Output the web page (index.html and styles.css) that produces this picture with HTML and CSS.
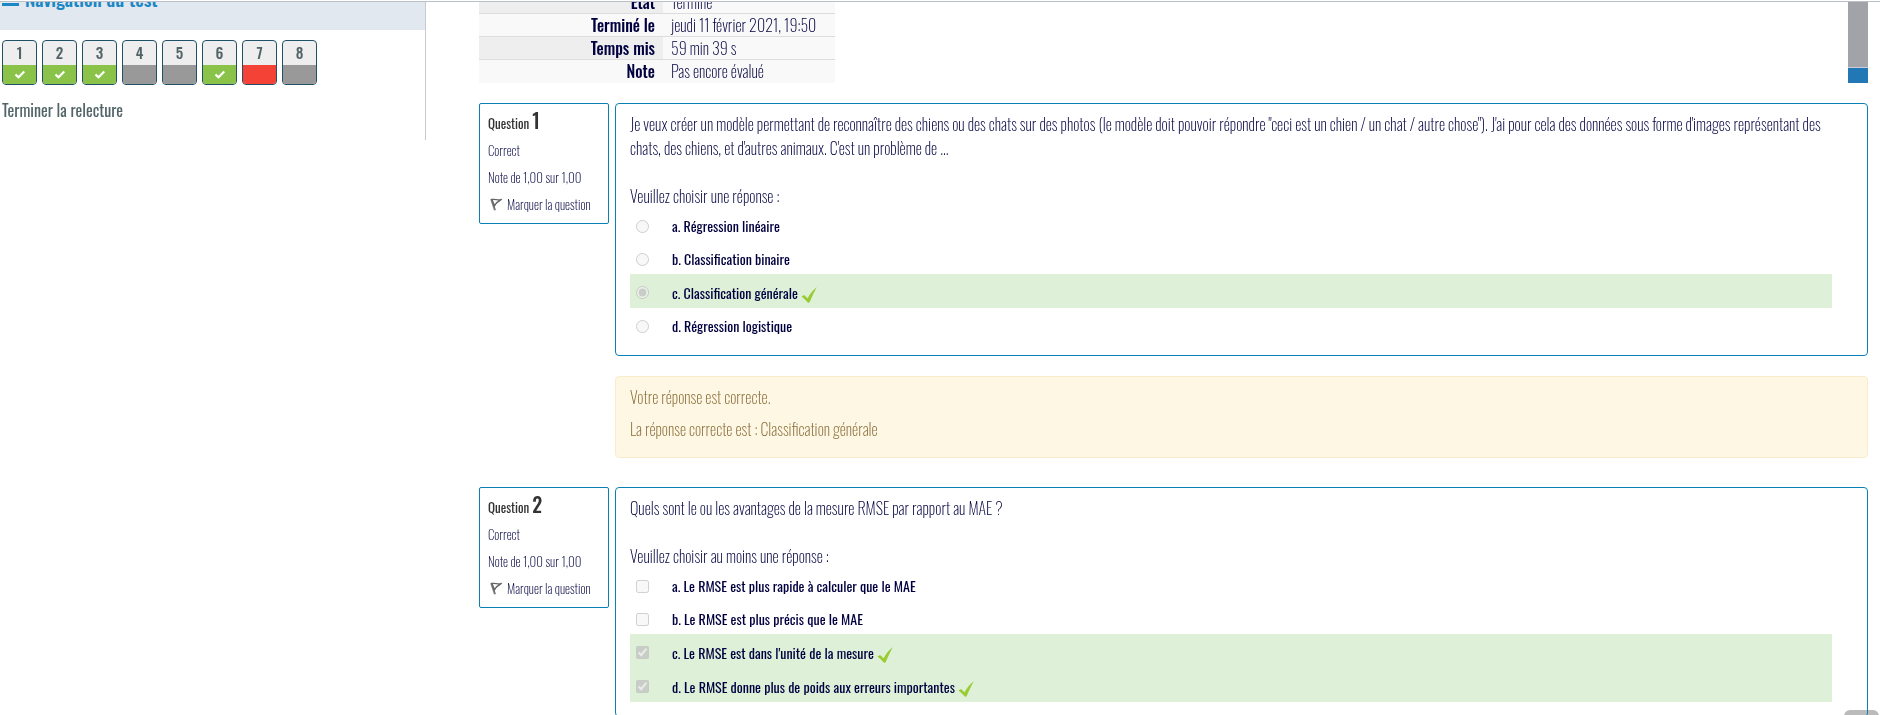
FILE: index.html
```html
<!DOCTYPE html>
<html lang="fr">
<head>
<meta charset="utf-8">
<title>Relecture du test</title>
<link rel="stylesheet" href="styles.css">
</head>
<body>
<svg class="sprite" aria-hidden="true">
  <symbol id="tick" viewBox="0 0 16 16"><path d="M0.5 9.5L3 8l3.6 3.2C9 6.500 12 3 15.800 0.200C13.500 4.500 11 9.500 8.500 15.500L7 15.700C5 13.500 3 11.500 0.500 9.500Z" fill="#9c3"/></symbol>
  <symbol id="check" viewBox="0 0 12 9"><path d="M1.500 4.500L4.500 7.300L10.300 1.500" fill="none" stroke="#fff" stroke-width="2.200"/></symbol>
  <symbol id="flag" viewBox="0 0 12 13"><path d="M1.200 1L5 12.300" fill="none" stroke="#777" stroke-width="2"/><path d="M2 1.500L4.500 8L6 5.500C7 4 9 3.500 10.800 1.700C8 2.500 5 .8 2 1.500Z" fill="#fff" stroke="#666" stroke-width="1.400"/></symbol>
</svg>
<div class="topline"></div>
<div class="page">
  <aside class="sidebar">
    <h2 class="block-title"><span class="dash"></span>Navigation du test</h2>
    <nav class="quiz-nav">
      <a class="qn ok" href="#q1">1<span class="state"><svg><use href="#check"/></svg></span></a>
      <a class="qn ok" href="#q2">2<span class="state"><svg><use href="#check"/></svg></span></a>
      <a class="qn ok" href="#q3">3<span class="state"><svg><use href="#check"/></svg></span></a>
      <a class="qn" href="#q4">4<span class="state"></span></a>
      <a class="qn" href="#q5">5<span class="state"></span></a>
      <a class="qn ok" href="#q6">6<span class="state"><svg><use href="#check"/></svg></span></a>
      <a class="qn ko" href="#q7">7<span class="state"></span></a>
      <a class="qn" href="#q8">8<span class="state"></span></a>
    </nav>
    <a class="finish" href="#end">Terminer la relecture</a>
  </aside>
  <main class="main">
    <div class="overview">
      <table class="summary">
        <tr><th scope="row">État</th><td>Terminé</td></tr>
        <tr><th scope="row">Terminé le</th><td>jeudi 11 février 2021, 19:50</td></tr>
        <tr><th scope="row">Temps mis</th><td>59 min 39 s</td></tr>
        <tr><th scope="row">Note</th><td>Pas encore évalué</td></tr>
      </table>
      <div class="rail"><div class="rail-grey"></div><div class="rail-blue"></div></div>
    </div>

    <section class="question" id="q1">
      <div class="info">
        <h3>Question <b>1</b></h3>
        <p>Correct</p>
        <p>Note de 1,00 sur 1,00</p>
        <a class="mark" href="#q1"><svg><use href="#flag"/></svg>Marquer la question</a>
      </div>
      <div class="content">
        <div class="formulation">
          <p class="text">Je veux créer un modèle permettant de reconnaître des chiens ou des chats sur des photos (le modèle doit pouvoir répondre "ceci est un chien / un chat / autre chose"). J'ai pour cela des données sous forme d'images représentant des chats, des chiens, et d'autres animaux. C'est un problème de ...</p>
          <p class="prompt">Veuillez choisir une réponse :</p>
          <div class="answer"><input type="radio" name="r1" id="r1a" disabled><label for="r1a">a. Régression linéaire</label></div>
          <div class="answer"><input type="radio" name="r1" id="r1b" disabled><label for="r1b">b. Classification binaire</label></div>
          <div class="answer correct"><input type="radio" name="r1" id="r1c" disabled checked><label for="r1c">c. Classification générale</label><svg><use href="#tick"/></svg></div>
          <div class="answer"><input type="radio" name="r1" id="r1d" disabled><label for="r1d">d. Régression logistique</label></div>
        </div>
        <div class="outcome">
          <p>Votre réponse est correcte.</p>
          <p>La réponse correcte est : Classification générale</p>
        </div>
      </div>
    </section>

    <section class="question" id="q2">
      <div class="info">
        <h3>Question <b>2</b></h3>
        <p>Correct</p>
        <p>Note de 1,00 sur 1,00</p>
        <a class="mark" href="#q2"><svg><use href="#flag"/></svg>Marquer la question</a>
      </div>
      <div class="content">
        <div class="formulation">
          <p class="text">Quels sont le ou les avantages de la mesure RMSE par rapport au MAE ?</p>
          <p class="prompt">Veuillez choisir au moins une réponse :</p>
          <div class="answer"><input type="checkbox" id="c2a" disabled><label for="c2a">a. Le RMSE est plus rapide à calculer que le MAE</label></div>
          <div class="answer"><input type="checkbox" id="c2b" disabled><label for="c2b">b. Le RMSE est plus précis que le MAE</label></div>
          <div class="answer correct"><input type="checkbox" id="c2c" disabled checked><label for="c2c">c. Le RMSE est dans l'unité de la mesure</label><svg><use href="#tick"/></svg></div>
          <div class="answer correct"><input type="checkbox" id="c2d" disabled checked><label for="c2d">d. Le RMSE donne plus de poids aux erreurs importantes</label><svg><use href="#tick"/></svg></div>
        </div>
      </div>
    </section>
  </main>
</div>
<button class="to-top" type="button" aria-label="Haut de page"></button>
</body>
</html>
```
FILE: styles.css
```css
* { box-sizing: border-box; }
body {
  margin: 0;
  padding-top: 1px;
  height: 100vh;
  overflow: hidden;
  display: flex;
  flex-direction: column;
  background: #fff;
  color: #000040;
  font: 200 16px/24px Oswald, "Liberation Sans Narrow", "Roboto Condensed", Roboto, sans-serif;
}
h2, h3, p { margin: 0; }
a { color: inherit; text-decoration: none; }
.sprite { display: none; }
.topline { flex: none; height: 1px; background: #bbbfc9; }
.page {
  flex: 1;
  min-height: 0;
  display: flex;
  align-items: flex-start;
  gap: 53px;
  padding-right: 12px;
  overflow: hidden;
}

.sidebar {
  flex: none;
  width: 426px;
  padding-bottom: 18px;
  border-right: 1px solid #c8cacf;
  color: #526468;
}
.block-title {
  display: flex;
  align-items: center;
  gap: 6px;
  height: 50px;
  margin-top: -22px;
  padding: 0 0 14px 2px;
  background: #e1e8ef;
  color: #1b87c5;
  font-size: 19px;
  font-weight: 500;
}
.dash { width: 17px; height: 3px; margin-top: 13px; background: #1b87c5; }
.quiz-nav { display: flex; gap: 5px; padding: 10px 2px; }
.qn {
  display: flex;
  flex-direction: column;
  justify-content: space-between;
  width: 35px;
  height: 45px;
  border: 1px solid #205068;
  border-radius: 4px;
  overflow: hidden;
  background: #eee;
  font-size: 15px;
  font-weight: 500;
  line-height: 23px;
  text-align: center;
}
.state { display: flex; justify-content: center; align-items: center; height: 19px; background: #999; }
.state svg { width: 12px; height: 9px; }
.ok .state { background: #8bc34a; }
.ko .state { background: #f44336; }
.finish { display: block; margin-top: 3px; padding-left: 2px; font-weight: 400; }

.main { flex: 1; min-width: 0; }
.overview { display: flex; justify-content: space-between; margin-top: -12px; }
.summary { width: 356px; border-spacing: 0; border-collapse: collapse; background: #f9f9f9; }
.summary th, .summary td { height: 23px; padding: 0 8px; line-height: 22px; text-align: left; border-top: 1px solid #ddd; }
.summary th { width: 184px; text-align: right; font-weight: 500; }
.summary tr:nth-child(odd) th { background: #eee; }
.rail { display: flex; flex-direction: column; gap: 1px; width: 20px; background: #ccd; }
.rail-grey { flex: 1; background: #a2a3a8; }
.rail-blue { height: 15px; background: #2278b4; }

.question { display: flex; align-items: flex-start; gap: 6px; margin-top: 20px; }
.question + .question { margin-top: 29px; }
.info {
  flex: none;
  width: 130px;
  height: 121px;
  padding: 3px 8px;
  border: 1px solid #0a80b5;
  border-radius: 2px;
  font-size: 13px;
  line-height: 27px;
  white-space: nowrap;
}
.info h3 { font-size: 13px; font-weight: 400; color: #333; }
.info b { font-size: 20px; font-weight: 500; }
.mark { display: flex; align-items: center; gap: 5px; padding-left: 2px; }
.mark svg { width: 12px; height: 13px; }
.content { flex: 1; min-width: 0; }
.formulation { padding: 8px 35px 14px 14px; border: 1px solid #0a80b5; border-radius: 4px; }
.text { margin-bottom: 24px; }
.answer { display: flex; align-items: center; height: 33px; padding: 4px 0 0 6px; font-size: 14px; font-weight: 400; }
.answer.correct { height: 34px; background: #def0d8; }
.answer input { width: 13px; height: 13px; margin: 0 23px 0 0; }
.answer svg { width: 16px; height: 16px; margin: 4px 0 0 3px; }
.outcome {
  margin-top: 20px;
  padding: 8px 14px;
  border: 1px solid #faebcc;
  border-radius: 4px;
  background: #fdf7e3;
  color: #8a6d3b;
}
.outcome p { margin-bottom: 8px; }
.to-top {
  position: fixed;
  right: 1px;
  bottom: -30px;
  width: 35px;
  height: 35px;
  border: 0;
  border-radius: 6px;
  background: #bbb;
  z-index: -1;
}
```
